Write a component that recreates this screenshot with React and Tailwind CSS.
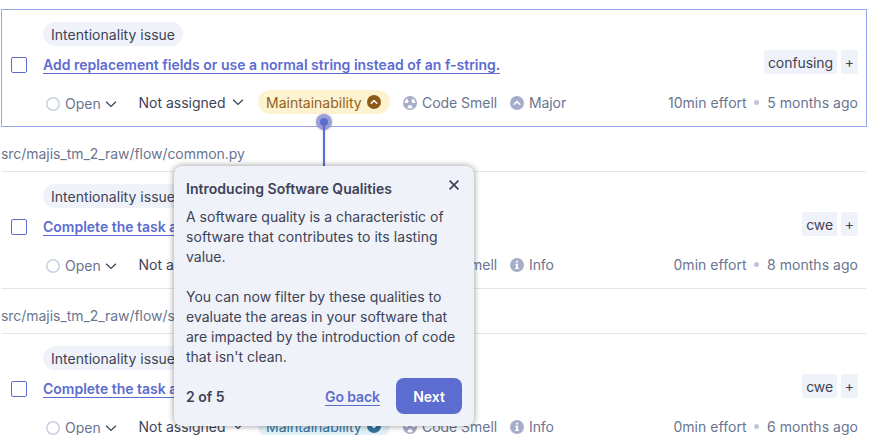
import React from "react";

function Chevron() {
  return (
    <svg className="h-4 w-4 shrink-0" viewBox="0 0 16 16" fill="none" stroke="#3e4357" strokeWidth="1.3">
      <path d="M3.1 5.8L8 10.4l4.9-4.6" />
    </svg>
  );
}

function SeverityIcon({ kind, className }) {
  return (
    <svg className={`h-3.5 w-3.5 shrink-0 ${className}`} viewBox="0 0 14 14">
      <circle cx="7" cy="7" r="7" fill="currentColor" />
      {kind === "up" && (
        <path d="M4.2 8.2L7 5.6l2.8 2.6" fill="none" stroke="#fff" strokeWidth="1.5" strokeLinecap="round" strokeLinejoin="round" />
      )}
      {kind === "down" && (
        <path d="M4.2 5.8L7 8.4l2.8-2.6" fill="none" stroke="#fff" strokeWidth="1.5" strokeLinecap="round" strokeLinejoin="round" />
      )}
      {kind === "info" && (
        <path d="M6 2.8h2v1.8H6zM5.2 5.8H8v4h.9V11H5.2V9.8H6V7h-.8z" fill="#fff" />
      )}
    </svg>
  );
}

function CodeSmellIcon() {
  return (
    <svg className="h-3.5 w-3.5 shrink-0 text-[#a6adc8]" viewBox="0 0 14 14">
      <circle cx="7" cy="7" r="7" fill="currentColor" />
      <path d="M1.6 6.9A5.4 5.4 0 0 1 4.1 2.5L5.7 5.3A2.1 2.1 0 0 0 4.9 6.9z" fill="#fff" />
      <path d="M12.4 6.9A5.4 5.4 0 0 0 9.9 2.5L8.3 5.3a2.1 2.1 0 0 1 .8 1.6z" fill="#fff" />
      <path d="M4.2 11.7L5.9 8.9a2.1 2.1 0 0 0 2.2 0l1.7 2.8a5.6 5.6 0 0 1-5.6 0z" fill="#fff" />
    </svg>
  );
}

function IssueCard({ selected, title, tag, quality, severity, effort, age }) {
  return (
    <article
      className={`flex h-[118px] w-[866px] shrink-0 items-start border pr-2 ${
        selected ? "border-[#9ba3e6]" : "border-x-transparent border-y-[#e6e6e8]"
      }`}
    >
      <span className="mt-[47px] ml-[9px] h-4 w-4 shrink-0 rounded-[2px] border border-[#5d6cd0] bg-white" />
      <div className="ml-4 flex min-w-0 flex-1 flex-col">
        <div className="mt-3 flex h-6">
          <span className="w-[140px] rounded-full bg-[#eff2f9] px-2 leading-[26px] tracking-[0.03px] whitespace-nowrap">
            Intentionality issue
          </span>
        </div>
        <div className="flex h-10 items-start justify-between">
          <a className="mt-2 h-5 border-b border-[#5d6cd0] leading-[22px] font-semibold tracking-[-0.004px] whitespace-nowrap text-[#5d6cd0]">
            {title}
          </a>
          <div className="mt-1 flex gap-1">
            <span className="h-6 rounded-[2px] bg-[#eff2f9] px-1 leading-[26px] tracking-[-0.08px]">{tag}</span>
            <span className="h-6 w-[17px] rounded-[2px] bg-[#eff2f9] text-center leading-6">+</span>
          </div>
        </div>
        <div className="mt-1 flex h-6 items-center text-[#6a7590]">
          <div className="flex w-[95px] items-center pt-[3px] pl-[3px]">
            <svg className="h-3.5 w-3.5 shrink-0" viewBox="0 0 14 14">
              <circle cx="7" cy="7" r="6.2" fill="none" stroke="#c8d0e6" strokeWidth="1.5" />
            </svg>
            <span className="ml-[5px] w-[38px] leading-5">Open</span>
            <Chevron />
          </div>
          <div className="flex w-[120px] items-center text-[#3e4357]">
            <span className="h-[17px] w-[92px] overflow-hidden pl-[0.5px] leading-[18px]">Not assigned</span>
            <Chevron />
          </div>
          <span
            className={`flex h-6 w-[132px] items-center rounded-full px-2 leading-6 ${
              quality === "up" ? "bg-[#fef3d0] text-[#93611a]" : "bg-[#e2f1f8] text-[#31739c]"
            }`}
          >
            <span className="w-[101px] pt-px">Maintainability</span>
            <SeverityIcon kind={quality} className={quality === "up" ? "text-[#8b5a16]" : "text-[#31739c]"} />
          </span>
          <span className="ml-[13px] flex w-[107px] items-center gap-[5px] pt-px tracking-[-0.04px]">
            <CodeSmellIcon />
            Code Smell
          </span>
          <span className="flex items-center gap-[5px] pt-px tracking-[-0.1px]">
            <SeverityIcon kind={severity === "Major" ? "up" : "info"} className="text-[#a6adc8]" />
            {severity}
          </span>
          <span className="ml-auto flex items-center pt-px tracking-[0.03px]">
            {effort} effort
            <span className="mr-2 ml-[7.5px] h-[5px] w-[5px] rounded-full bg-[#bdc6dd]" />
            {age} months ago
          </span>
        </div>
      </div>
    </article>
  );
}

function FilePath({ children }) {
  return (
    <h2 className="h-11 shrink-0 pt-[17px] leading-5 tracking-[-0.05px] text-[#6a7590]">{children}</h2>
  );
}

function TourPopover() {
  return (
    <div className="absolute top-[114px] left-[174px] flex w-[300px] flex-col">
      <div className="flex h-[52px] flex-col items-center">
        <span className="flex h-4 w-4 shrink-0 items-center justify-center rounded-full bg-[#9a9fd8] shadow-[0_0_3px_rgba(0,0,0,0.2)]">
          <span className="h-2 w-2 rounded-full bg-[#5d6cd0]" />
        </span>
        <span className="-mt-1 w-0.5 flex-1 bg-[#5d6cd0] shadow-[0_0_3px_rgba(0,0,0,0.15)]" />
      </div>
      <section className="flex h-[260px] flex-col rounded-lg bg-[#eff2f9] p-3 shadow-[0_0_6px_rgba(0,0,0,0.42)]">
        <header className="flex h-[29px] justify-between">
          <h3 className="leading-[22px] font-semibold tracking-[0.03px]">Introducing Software Qualities</h3>
          <svg className="-mt-px h-4 w-4" viewBox="0 0 16 16" fill="none" stroke="#3e4357" strokeWidth="1.7">
            <path d="M3.6 3.6l8.8 8.8m0-8.8l-8.8 8.8" />
          </svg>
        </header>
        <p className="leading-5">
          A software quality is a characteristic of
          <br />
          <span className="tracking-[0.06px]">software that contributes to its lasting</span>
          <br />
          value.
          <br />
          <br />
          You can now filter by these qualities to
          <br />
          evaluate the areas in your software that
          <br />
          are impacted by the introduction of code
          <br />
          that isn't clean.
        </p>
        <footer className="mt-auto flex h-9 items-center font-semibold">
          <span className="flex-1 pt-0.5">2 of 5</span>
          <a className="mr-4 h-5 border-b border-[#5d6cd0] leading-[21px] tracking-[-0.08px] text-[#5d6cd0]">Go back</a>
          <button className="h-9 w-[66px] rounded-lg bg-[#5d6cd0] pt-0.5 text-white">Next</button>
        </footer>
      </section>
    </div>
  );
}

export default function App() {
  return (
    <main className="relative flex h-[435px] w-[884px] flex-col overflow-hidden bg-white pt-[9px] pl-px font-['Inter',sans-serif] text-sm text-[#3e4357]">
      <IssueCard
        selected
        title="Add replacement fields or use a normal string instead of an f-string."
        tag="confusing"
        quality="up"
        severity="Major"
        effort="10min"
        age="5"
      />
      <FilePath>src/majis_tm_2_raw/flow/common.py</FilePath>
      <IssueCard title="Complete the task a" tag="cwe" quality="down" severity="Info" effort="0min" age="8" />
      <FilePath>src/majis_tm_2_raw/flow/s</FilePath>
      <IssueCard title="Complete the task a" tag="cwe" quality="down" severity="Info" effort="0min" age="6" />
      <TourPopover />
    </main>
  );
}
